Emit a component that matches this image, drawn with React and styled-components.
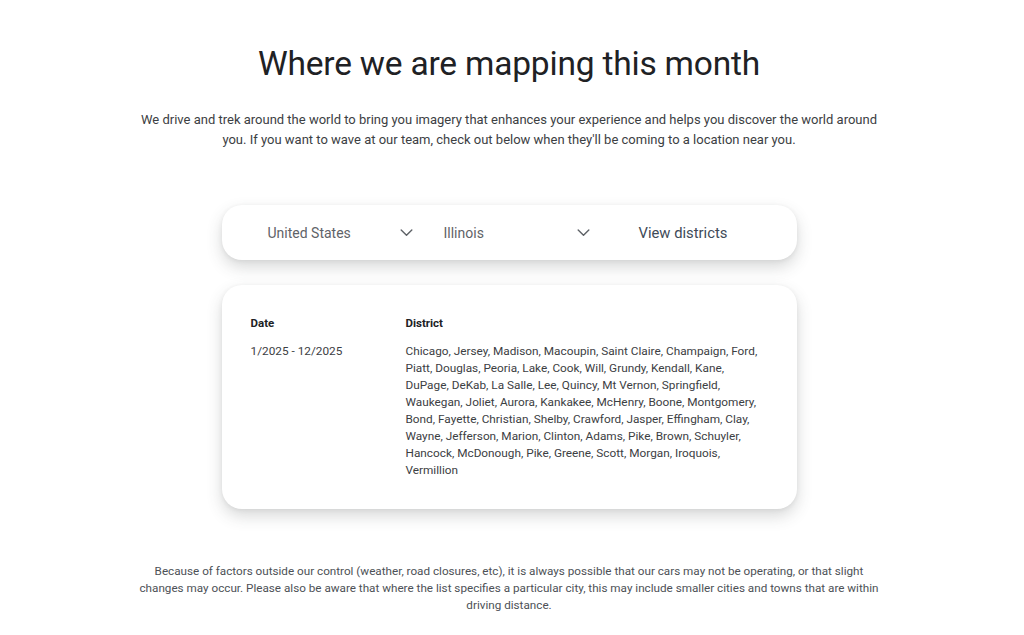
import React from 'react';
import styled, { createGlobalStyle } from 'styled-components';

const GlobalStyle = createGlobalStyle`
  html, body {
    margin: 0;
    padding: 0;
    background: #ffffff;
    font-family: Roboto, "Liberation Sans", Arial, sans-serif;
    color: #202124;
  }
`;

const Page = styled.main`
  width: 1018px;
  display: flex;
  flex-direction: column;
  align-items: center;
  padding-top: 44px;
`;

const Title = styled.h1`
  margin: 0;
  font-size: 33.5px;
  font-weight: 400;
  letter-spacing: -0.2px;
  color: #202124;
  line-height: 40px;
`;

const Intro = styled.p`
  margin: 26px 0 0;
  width: 756px;
  text-align: center;
  font-size: 13px;
  line-height: 20px;
  color: #3c4043;
`;

const Card = styled.section`
  width: 575px;
  box-sizing: border-box;
  background: #fff;
  border-radius: 20px;
  box-shadow: 0 7px 16px rgba(60, 64, 67, 0.2), 0 1px 4px rgba(60, 64, 67, 0.08);
`;

const Selector = styled(Card)`
  margin-top: 55px;
  height: 55px;
  display: flex;
  align-items: center;
  padding: 0 46px;
`;

const Dropdown = styled.div`
  display: flex;
  align-items: center;
  justify-content: space-between;
  width: ${({ $w }) => $w}px;
  margin-right: ${({ $gap }) => $gap}px;
  font-size: 14px;
  color: #5f6368;
`;

const Chevron = () => (
  <svg width="17" height="17" viewBox="0 0 24 24" fill="none" stroke="#5f6368" strokeWidth="2" strokeLinecap="round" strokeLinejoin="round">
    <path d="M4.5 8.5l7.5 7.5 7.5-7.5" />
  </svg>
);

const ViewLink = styled.a`
  font-size: 14.8px;
  font-weight: 400;
  color: #404a57;
  text-decoration: none;
`;

const Schedule = styled(Card)`
  margin-top: 25px;
  padding: 30px 29px 30px;
`;

const Grid = styled.div`
  display: grid;
  grid-template-columns: 155px 1fr;
  row-gap: 11px;
  font-size: 11.8px;
  line-height: 17px;
  color: #3c4043;
`;

const Head = styled.div`
  font-weight: 700;
  font-size: 11.5px;
  color: #202124;
`;

const Cell = styled.div`
  max-width: ${({ $max }) => ($max ? `${$max}px` : 'none')};
`;

const Note = styled.p`
  margin: 54px 0 0;
  width: 744px;
  text-align: center;
  font-size: 11.7px;
  line-height: 17px;
  color: #4d5156;
`;

const districts =
  'Chicago, Jersey, Madison, Macoupin, Saint Claire, Champaign, Ford, Piatt, Douglas, Peoria, Lake, Cook, Will, Grundy, Kendall, Kane, DuPage, DeKab, La Salle, Lee, Quincy, Mt Vernon, Springfield, Waukegan, Joliet, Aurora, Kankakee, McHenry, Boone, Montgomery, Bond, Fayette, Christian, Shelby, Crawford, Jasper, Effingham, Clay, Wayne, Jefferson, Marion, Clinton, Adams, Pike, Brown, Schuyler, Hancock, McDonough, Pike, Greene, Scott, Morgan, Iroquois, Vermillion';

export default function App() {
  return (
    <>
      <GlobalStyle />
      <Page>
        <Title>Where we are mapping this month</Title>
        <Intro>
          We drive and trek around the world to bring you imagery that enhances your experience and helps you
          discover the world around you. If you want to wave at our team, check out below when they'll be coming to a
          location near you.
        </Intro>

        <Selector>
          <Dropdown $w={147} $gap={29}>
            <span>United States</span>
            <Chevron />
          </Dropdown>
          <Dropdown $w={148} $gap={47}>
            <span>Illinois</span>
            <Chevron />
          </Dropdown>
          <ViewLink href="#">View districts</ViewLink>
        </Selector>

        <Schedule>
          <Grid>
            <Head>Date</Head>
            <Head>District</Head>
            <Cell>1/2025 - 12/2025</Cell>
            <Cell $max={362}>{districts}</Cell>
          </Grid>
        </Schedule>

        <Note>
          Because of factors outside our control (weather, road closures, etc), it is always possible that our cars may
          not be operating, or that slight changes may occur. Please also be aware that where the list specifies a
          particular city, this may include smaller cities and towns that are within driving distance.
        </Note>
      </Page>
    </>
  );
}
